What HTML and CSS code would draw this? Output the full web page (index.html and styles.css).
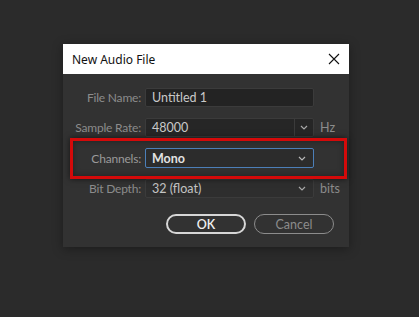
FILE: index.html
```html
<!DOCTYPE html>
<html lang="en">
<head>
    <meta charset="UTF-8">
    <title>New Audio File</title>
    <link rel="stylesheet" href="styles.css">
</head>
<body>

    <!-- New Audio File dialog -->
    <div class="dialog">
        <div class="title-bar">
            <span class="title">New Audio File</span>
            <svg class="close" width="12" height="12" viewBox="0 0 12 12">
                <path d="M1 1 L11 11 M11 1 L1 11" stroke="#111" stroke-width="1.1" fill="none"/>
            </svg>
        </div>

        <div class="dialog-body">
            <div class="form-grid">
                <label>File Name:</label>
                <div class="field">Untitled 1</div>
                <span class="unit"></span>

                <label>Sample Rate:</label>
                <div class="field split">
                    <span class="value">48000</span>
                    <span class="arrow-btn"><svg width="8" height="5" viewBox="0 0 8 5"><path d="M1 1 L4 4 L7 1" stroke="#a8a8a8" stroke-width="1.2" fill="none"/></svg></span>
                </div>
                <span class="unit">Hz</span>

                <label class="active">Channels:</label>
                <div class="field focused">
                    <span class="value">Mono</span>
                    <svg width="8" height="5" viewBox="0 0 8 5"><path d="M1 1 L4 4 L7 1" stroke="#b8b8b8" stroke-width="1.2" fill="none"/></svg>
                </div>
                <span class="unit"></span>

                <label>Bit Depth:</label>
                <div class="field plain">
                    <span class="value">32 (float)</span>
                    <svg width="8" height="5" viewBox="0 0 8 5"><path d="M1 1 L4 4 L7 1" stroke="#a8a8a8" stroke-width="1.2" fill="none"/></svg>
                </div>
                <span class="unit">bits</span>
            </div>

            <div class="buttons">
                <button class="btn primary">OK</button>
                <button class="btn">Cancel</button>
            </div>

            <!-- red highlight round the Channels row -->
            <div class="highlight"></div>
        </div>
    </div>

</body>
</html>
```

FILE: styles.css
```css
/* General Styles */
body {
    margin: 0;
    background-color: #2b2b2b;
    font-family: Lato, "Open Sans", sans-serif;
    width: 419px;
    height: 317px;
    overflow: hidden;
}

/* Dialog */
.dialog {
    margin: 44px 0 0 63px;
    width: 286px;
    box-shadow: 0 2px 10px rgba(0, 0, 0, 0.35);
}

.title-bar {
    height: 30px;
    background-color: #fff;
    display: flex;
    align-items: center;
    justify-content: space-between;
    padding: 0 9px 0 9px;
}

.title {
    font-family: "Noto Sans", sans-serif;
    font-size: 12px;
    color: #111;
}

.close {
    margin-top: -1px;
}

.dialog-body {
    position: relative;
    background-color: #323232;
    padding: 14px 0 14px 0;
    height: 145px;
}

/* Form rows */
.form-grid {
    display: grid;
    grid-template-columns: 77px 169px auto;
    column-gap: 5px;
    row-gap: 11px;
    align-items: center;
}

.form-grid label {
    text-align: right;
    font-size: 12px;
    letter-spacing: -0.2px;
    color: #8c8c8c;
    margin-right: -1px;
}

.form-grid label.active {
    color: #9a9a9a;
}

.field {
    height: 19px;
    box-sizing: border-box;
    background-color: #232323;
    border: 1px solid #3b3b3b;
    border-radius: 2px;
    color: #c9c9c9;
    font-size: 12.5px;
    display: flex;
    align-items: center;
    justify-content: space-between;
    padding: 0 7px 0 6px;
}

.field.split {
    padding-right: 0;
    background-color: #262626;
}

.arrow-btn {
    width: 18px;
    height: 17px;
    border-left: 1px solid #3b3b3b;
    display: flex;
    align-items: center;
    justify-content: center;
}

.field.focused {
    height: 20px;
    background-color: #2c2c2c;
    border-color: #4c7fb8;
    color: #e2e2e2;
    font-weight: bold;
}

.field.plain {
    background-color: #2e2e2e;
    color: #c4c4c4;
}

.unit {
    font-size: 12.5px;
    color: #8c8c8c;
    margin-left: 1px;
}

/* Buttons */
.buttons {
    display: flex;
    justify-content: flex-end;
    gap: 8px;
    padding-right: 15px;
    margin-top: 16px;
}

.btn {
    width: 80px;
    height: 20px;
    border-radius: 10px;
    background: transparent;
    border: 1.5px solid #8c8c8c;
    color: #8c8c8c;
    font-family: Lato, sans-serif;
    font-size: 12.5px;
    padding: 0;
}

.btn.primary {
    border: 2px solid #d6d6d6;
    color: #f0f0f0;
    font-weight: 600;
}

/* Red annotation box */
.highlight {
    position: absolute;
    left: 7px;
    top: 64px;
    width: 271px;
    height: 35px;
    border: 3px solid #d40a0a;
    box-shadow: 0 0 6px rgba(0, 0, 0, 0.6), inset 0 0 6px rgba(0, 0, 0, 0.35);
}
```
